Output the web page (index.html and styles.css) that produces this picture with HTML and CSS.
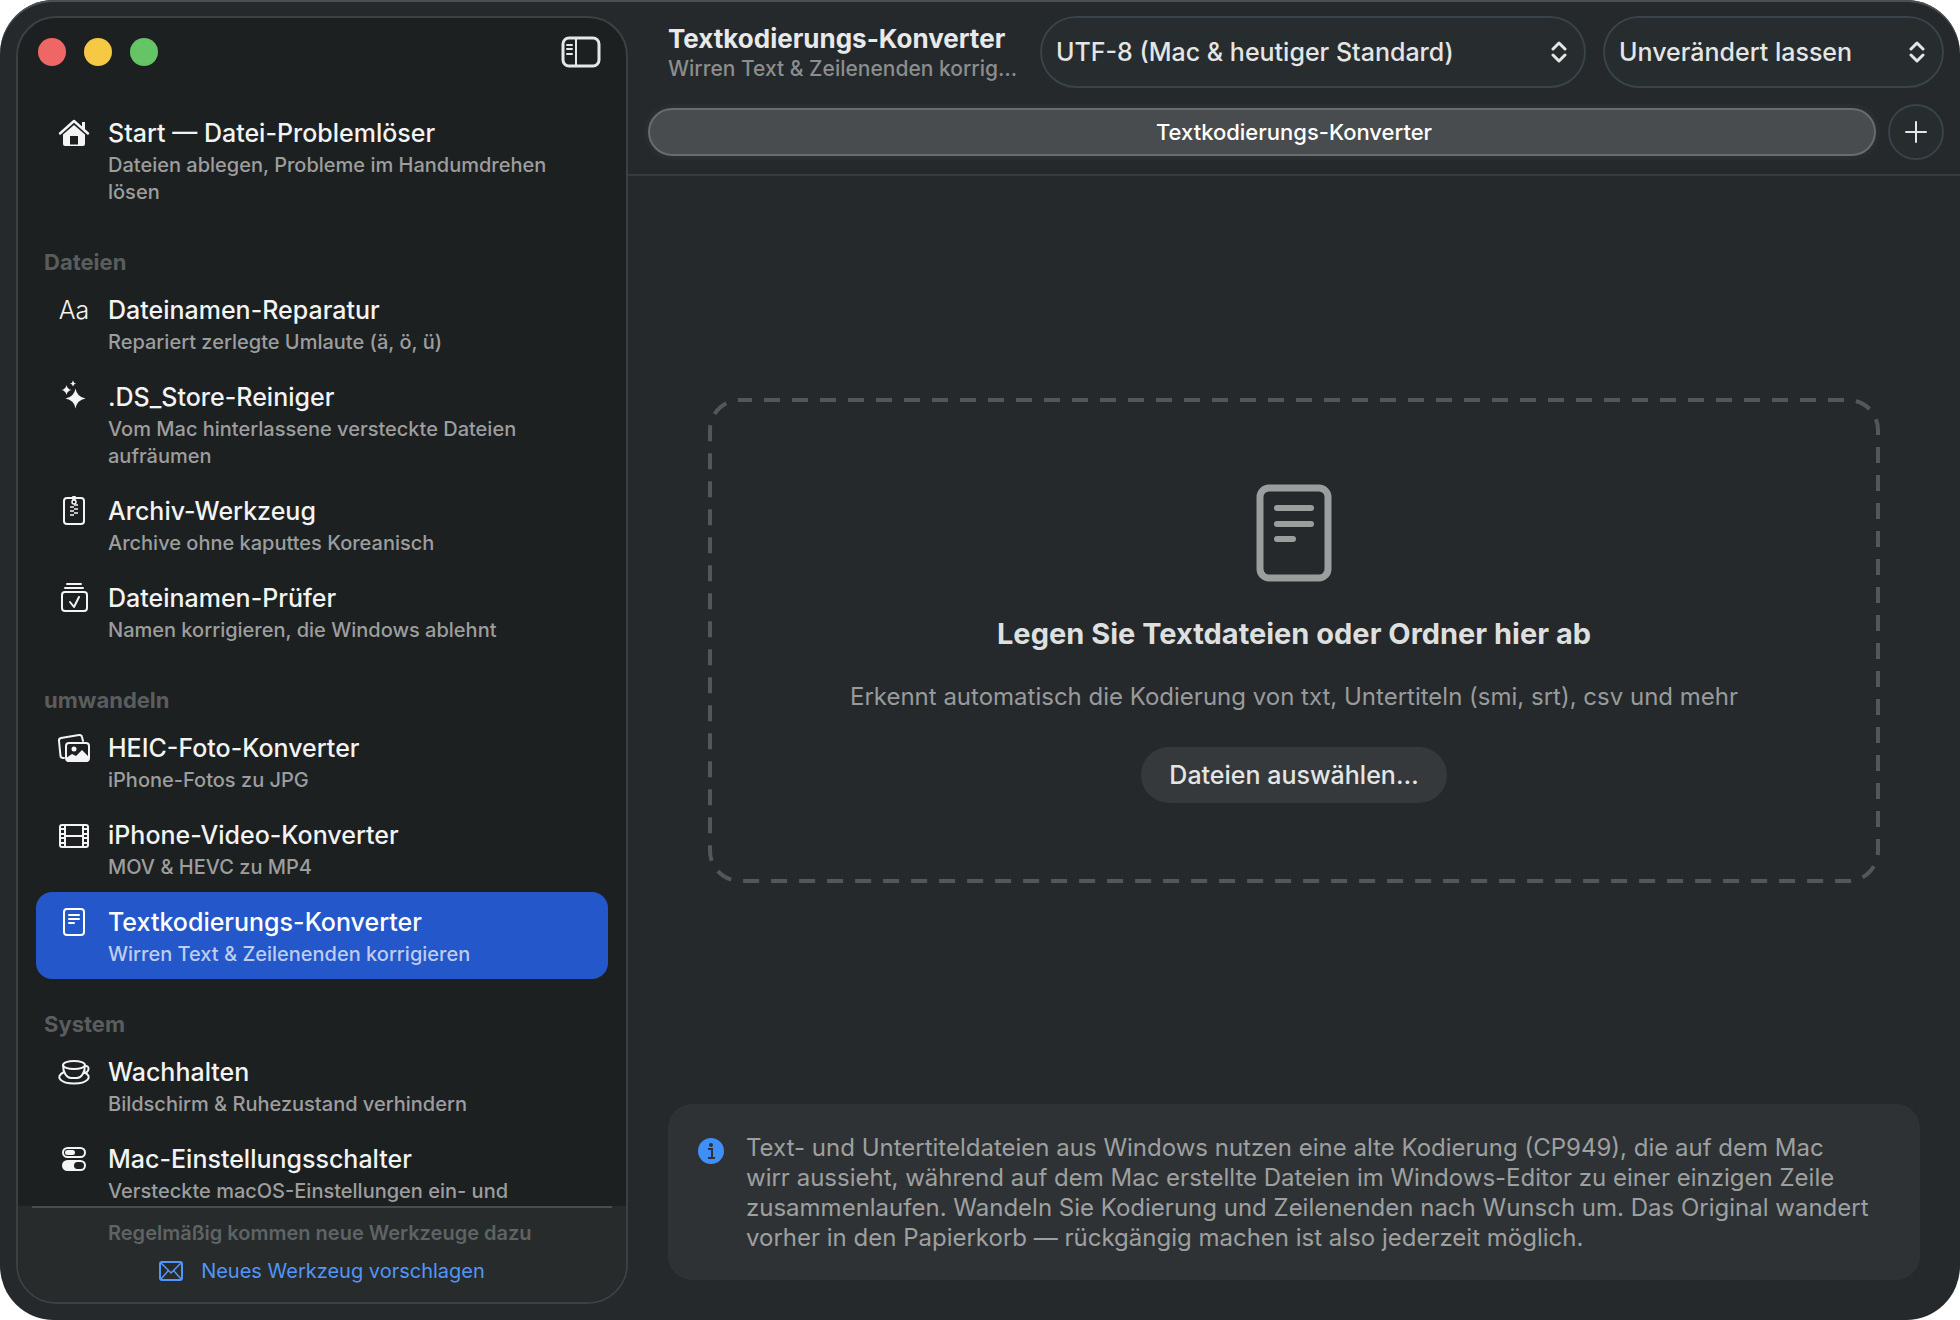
FILE: index.html
```html
<!DOCTYPE html>
<html lang="de">
<head>
    <meta charset="UTF-8">
    <meta name="viewport" content="width=device-width, initial-scale=1.0">
    <title>Textkodierungs-Konverter</title>
    <link rel="stylesheet" href="styles.css">
</head>
<body>

<div class="window">

    <!-- Sidebar -->
    <aside class="sidebar">
        <div class="titlebar">
            <div class="lights">
                <button type="button" class="light red" aria-label="Schließen"></button>
                <button type="button" class="light yellow" aria-label="Minimieren"></button>
                <button type="button" class="light green" aria-label="Maximieren"></button>
            </div>
            <button type="button" class="toggle" aria-label="Seitenleiste">
                <svg width="40" height="32" viewBox="0 0 40 32" fill="none" stroke="#e6e7e7" stroke-width="3">
                    <rect x="2" y="2" width="36" height="28" rx="6"/>
                    <path d="M15 2v28" stroke-width="2"/>
                    <path d="M6 9h5M6 13h5M6 18h5" stroke-width="2" stroke-linecap="round"/>
                </svg>
            </button>
        </div>

        <nav class="list">
            <a href="#" class="item">
                <svg class="icon" viewBox="0 0 34 34">
                    <path d="M3 16.500 17 4l14 12.500" fill="none" stroke="#f4f4f4" stroke-width="2.400" stroke-linecap="round" stroke-linejoin="round"/>
                    <path d="M25 5h3v8l-3-2.500z" fill="#f4f4f4"/>
                    <path d="M17 8 28 17.500V27a2 2 0 0 1-2 2h-5v-10h-8v10H8a2 2 0 0 1-2-2V17.500z" fill="#f4f4f4"/>
                    <path d="M13 27.500h8v1.500h-8z" fill="#f4f4f4"/>
                </svg>
                <span class="text">
                    <span class="name">Start — Datei-Problemlöser</span>
                    <span class="desc">Dateien ablegen, Probleme im Handumdrehen lösen</span>
                </span>
            </a>

            <h2>Dateien</h2>
            <a href="#" class="item">
                <span class="icon letters">Aa</span>
                <span class="text">
                    <span class="name">Dateinamen-Reparatur</span>
                    <span class="desc">Repariert zerlegte Umlaute (ä, ö, ü)</span>
                </span>
            </a>
            <a href="#" class="item">
                <svg class="icon" viewBox="0 0 34 34" fill="#f4f4f4">
                    <path d="M18.500 7.500q1.500 8.500 10 10q-8.500 1.500-10 10q-1.500-8.500-10-10q8.500-1.500 10-10z"/>
                    <path d="M9.500 4q.8 4.200 5 5q-4.200.8-5 5q-.8-4.200-5-5q4.200-.8 5-5z"/>
                    <path d="M16-.5q.5 2.500 3 3q-2.500.5-3 3q-.5-2.500-3-3q2.500-.5 3-3z"/>
                </svg>
                <span class="text">
                    <span class="name">.DS_Store-Reiniger</span>
                    <span class="desc">Vom Mac hinterlassene versteckte Dateien aufräumen</span>
                </span>
            </a>
            <a href="#" class="item">
                <svg class="icon" viewBox="0 0 34 34" fill="none" stroke="#f4f4f4" stroke-width="2">
                    <rect x="7" y="3" width="20" height="26" rx="3"/>
                    <rect x="15" y="1" width="4" height="4" rx="1" fill="#f4f4f4" stroke="none"/>
                    <circle cx="17" cy="7" r="2" stroke-width="1.500"/>
                    <path d="M13 12h4M13 16h4M13 20h4M17 10h4M17 14h4M17 18h4" stroke-width="1.600"/>
                </svg>
                <span class="text">
                    <span class="name">Archiv-Werkzeug</span>
                    <span class="desc">Archive ohne kaputtes Koreanisch</span>
                </span>
            </a>
            <a href="#" class="item">
                <svg class="icon" viewBox="0 0 34 34" fill="none" stroke="#f4f4f4" stroke-width="2" stroke-linecap="round" stroke-linejoin="round">
                    <path d="M10 2h14M8 6h18"/>
                    <rect x="5" y="10" width="25" height="19" rx="3"/>
                    <path d="M13 20l4 5 5-10"/>
                </svg>
                <span class="text">
                    <span class="name">Dateinamen-Prüfer</span>
                    <span class="desc">Namen korrigieren, die Windows ablehnt</span>
                </span>
            </a>

            <h2>umwandeln</h2>
            <a href="#" class="item">
                <svg class="icon" viewBox="0 0 34 34" fill="none" stroke="#f4f4f4" stroke-width="2">
                    <path d="M7 26H6q-2 0-2.500-2L2 9q-.3-2.500 2-3l18-3q2.500-.3 3 2l1 4" stroke-linecap="round"/>
                    <rect x="9" y="11" width="23" height="18" rx="3"/>
                    <circle cx="17" cy="17" r="2.500" fill="#f4f4f4" stroke="none"/>
                    <path d="M9 26l6-4 4 2 6-6 7 7v3l-2 2H11l-2-2z" fill="#f4f4f4" stroke="none"/>
                </svg>
                <span class="text">
                    <span class="name">HEIC-Foto-Konverter</span>
                    <span class="desc">iPhone-Fotos zu JPG</span>
                </span>
            </a>
            <a href="#" class="item">
                <svg class="icon" viewBox="0 0 34 34" fill="none" stroke="#f4f4f4" stroke-width="2">
                    <rect x="3" y="6" width="28" height="22" rx="2"/>
                    <path d="M8 6v22M26 6v22M8 17h18M3 10h5M3 15h5M3 19h5M3 24h5M26 10h5M26 15h5M26 19h5M26 24h5"/>
                </svg>
                <span class="text">
                    <span class="name">iPhone-Video-Konverter</span>
                    <span class="desc">MOV &amp; HEVC zu MP4</span>
                </span>
            </a>
            <a href="#" class="item selected" aria-current="page">
                <svg class="icon" viewBox="0 0 34 34" fill="none" stroke="#ffffff" stroke-width="2" stroke-linecap="round">
                    <rect x="7" y="3" width="20" height="26" rx="3"/>
                    <path d="M12 9h10M12 13h10M12 17h5"/>
                </svg>
                <span class="text">
                    <span class="name">Textkodierungs-Konverter</span>
                    <span class="desc">Wirren Text &amp; Zeilenenden korrigieren</span>
                </span>
            </a>

            <h2>System</h2>
            <a href="#" class="item">
                <svg class="icon" viewBox="0 0 34 34" fill="none" stroke="#f4f4f4" stroke-width="2">
                    <ellipse cx="17" cy="9" rx="11" ry="4"/>
                    <path d="M6 9c0 8 4 13 8 13h6c4 0 8-5 8-13"/>
                    <path d="M28 10c5-1 5 7-2 7"/>
                    <path d="M7 16c-10 5-3 11.500 10 11.500s20-6.500 10-11.500"/>
                </svg>
                <span class="text">
                    <span class="name">Wachhalten</span>
                    <span class="desc">Bildschirm &amp; Ruhezustand verhindern</span>
                </span>
            </a>
            <a href="#" class="item">
                <svg class="icon" viewBox="0 0 34 34">
                    <rect x="6" y="5" width="22" height="9" rx="4.500" fill="none" stroke="#f4f4f4" stroke-width="2"/>
                    <rect x="8" y="7" width="10" height="5" rx="2.500" fill="#f4f4f4"/>
                    <rect x="5" y="17" width="24" height="11" rx="5.500" fill="#f4f4f4"/>
                    <rect x="17" y="19" width="10" height="7" rx="3.500" fill="#1d2021"/>
                </svg>
                <span class="text">
                    <span class="name">Mac-Einstellungsschalter</span>
                    <span class="desc">Versteckte macOS-Einstellungen ein- und</span>
                </span>
            </a>
        </nav>

        <div class="footer">
            <p>Regelmäßig kommen neue Werkzeuge dazu</p>
            <a href="#">
                <svg width="24" height="20" viewBox="0 0 24 20" fill="none" stroke="#5196f8" stroke-width="2" stroke-linejoin="round">
                    <rect x="1" y="1" width="22" height="18" rx="2"/>
                    <path d="M2 2l10 10L22 2M2 18l7-8M22 18l-7-8" stroke-width="1.500"/>
                </svg>
                Neues Werkzeug vorschlagen
            </a>
        </div>
    </aside>

    <!-- Main area -->
    <main class="main">
        <header class="toolbar">
            <div class="heading">
                <h1>Textkodierungs-Konverter</h1>
                <p>Wirren Text &amp; Zeilenenden korrig…</p>
            </div>
            <div class="picker encoding">
                <select aria-label="Kodierung">
                    <option>UTF-8 (Mac &amp; heutiger Standard)</option>
                </select>
                <svg class="arrows" width="16" height="22" viewBox="0 0 16 22" fill="none" stroke="#e4e5e5" stroke-width="3" stroke-linecap="round" stroke-linejoin="round">
                    <path d="M2 8l6-6 6 6M2 14l6 6 6-6"/>
                </svg>
            </div>
            <div class="picker endings">
                <select aria-label="Zeilenenden">
                    <option>Unverändert lassen</option>
                </select>
                <svg class="arrows" width="16" height="22" viewBox="0 0 16 22" fill="none" stroke="#e4e5e5" stroke-width="3" stroke-linecap="round" stroke-linejoin="round">
                    <path d="M2 8l6-6 6 6M2 14l6 6 6-6"/>
                </svg>
            </div>
        </header>

        <div class="tabs">
            <button type="button" class="tab">Textkodierungs-Konverter</button>
            <button type="button" class="add" aria-label="Neuer Tab">
                <svg width="22" height="22" viewBox="0 0 22 22" fill="none" stroke="#e6e7e7" stroke-width="2" stroke-linecap="round">
                    <path d="M11 1v20M1 11h20"/>
                </svg>
            </button>
        </div>

        <section class="content">
            <div class="dropzone">
                <svg class="outline" aria-hidden="true">
                    <rect class="dashes" x="2" y="2" rx="30"/>
                </svg>
                <svg width="76" height="98" viewBox="0 0 76 98" fill="none" stroke="#9c9e9d" stroke-width="7" stroke-linecap="round">
                    <rect x="4" y="4" width="68" height="90" rx="9"/>
                    <path d="M21 24h34M21 40h34M21 55h16" stroke-width="6"/>
                </svg>
                <h2>Legen Sie Textdateien oder Ordner hier ab</h2>
                <p>Erkennt automatisch die Kodierung von txt, Untertiteln (smi, srt), csv und mehr</p>
                <button type="button" class="choose">Dateien auswählen…</button>
            </div>
        </section>

        <div class="info">
            <svg width="26" height="26" viewBox="0 0 26 26">
                <circle cx="13" cy="13" r="13" fill="#3f8ff7"/>
                <circle cx="13" cy="7" r="2" fill="#2f3234"/>
                <path d="M10 11h4v9M10 20h7" fill="none" stroke="#2f3234" stroke-width="2"/>
            </svg>
            <p>Text- und Untertiteldateien aus Windows nutzen eine alte Kodierung (CP949), die auf dem Mac<br>
            wirr aussieht, während auf dem Mac erstellte Dateien im Windows-Editor zu einer einzigen Zeile zusammenlaufen. Wandeln Sie Kodierung und Zeilenenden nach Wunsch um. Das Original wandert vorher in den Papierkorb — rückgängig machen ist also jederzeit möglich.</p>
        </div>
    </main>

</div>

</body>
</html>
```
FILE: styles.css
```css
* {
    box-sizing: border-box;
}
body {
    margin: 0;
    background-color: #ffffff;
    font-family: Inter, "Liberation Sans", sans-serif;
    color: #f2f3f3;
}
h1, h2, p {
    margin: 0;
}
a {
    text-decoration: none;
}
button, select {
    font-family: inherit;
    border: none;
    padding: 0;
}
.window {
    display: flex;
    height: 100vh;
    padding: 16px 0 16px 16px;
    border-radius: 54px;
    background-color: #25292c;
    box-shadow: inset 0 2px 0 #4a4f52;
    overflow: hidden;
}

/* Sidebar */
.sidebar {
    display: flex;
    flex-direction: column;
    flex: none;
    width: 612px;
    border: 2px solid #3a4144;
    border-radius: 40px;
    background-color: #1d2021;
    overflow: hidden;
}
.titlebar {
    display: flex;
    justify-content: space-between;
    align-items: center;
    padding: 16px 25px 16px 20px;
    height: 68px;
}
.lights {
    display: flex;
    gap: 18px;
}
.light {
    width: 28px;
    height: 28px;
    border-radius: 50%;
}
.red {
    background-color: #ee6764;
}
.yellow {
    background-color: #f5c943;
}
.green {
    background-color: #65c466;
}
.toggle {
    display: flex;
    background: none;
}
.list {
    flex: 1;
    min-height: 0;
    padding: 17px 18px 0;
    overflow: hidden;
}
.list h2 {
    padding: 32px 8px 5px;
    font-size: 22px;
    font-weight: 700;
    line-height: 26px;
    color: #5a5d5e;
}
.item {
    display: flex;
    gap: 17px;
    padding: 14px 24px 11px 21px;
    border-radius: 16px;
    color: #f2f3f3;
}
.icon {
    flex: none;
    width: 34px;
    height: 34px;
    overflow: visible;
}
.letters {
    font-size: 25px;
    font-weight: 300;
    line-height: 32px;
    text-align: center;
}
.text {
    display: flex;
    flex-direction: column;
    gap: 3px;
}
.name {
    font-size: 25px;
    font-weight: 500;
    line-height: 32px;
}
.desc {
    font-size: 20px;
    font-weight: 500;
    line-height: 27px;
    color: #9c9e9e;
}
.selected {
    background-color: #2457c9;
    color: #ffffff;
}
.selected .desc {
    color: #bdccef;
}
.footer {
    margin: 0 -2px;
    padding: 13px 16px 17px;
    background-color: #272b2c;
    background-image: linear-gradient(#4a4d4e, #4a4d4e);
    background-size: calc(100% - 32px) 2px;
    background-position: 16px 0;
    background-repeat: no-repeat;
    font-size: 20px;
    line-height: 28px;
}
.footer p {
    padding-left: 76px;
    font-weight: 600;
    color: #5f6364;
}
.footer a {
    display: flex;
    justify-content: center;
    align-items: center;
    gap: 18px;
    margin-top: 10px;
    color: #5196f8;
}

/* Main area */
.main {
    display: flex;
    flex-direction: column;
    flex: 1;
    min-width: 0;
}
.toolbar {
    display: flex;
    align-items: center;
    gap: 17px;
    padding: 0 16px 0 40px;
}
.heading {
    flex: 1;
    min-width: 0;
    padding-top: 1px;
}
.heading h1 {
    font-size: 26px;
    font-weight: 700;
    line-height: 32px;
    color: #e8e9e9;
}
.heading p {
    font-size: 21px;
    font-weight: 500;
    line-height: 28px;
    color: #8b8e8f;
    white-space: nowrap;
}
.picker {
    display: flex;
    align-items: center;
    position: relative;
}
.encoding {
    width: 546px;
}
.endings {
    width: 341px;
}
.picker select {
    width: 100%;
    height: 72px;
    padding: 0 56px 0 14px;
    appearance: none;
    border: 2px solid #38434a;
    border-radius: 36px;
    background-color: #272c2e;
    font-size: 25px;
    font-weight: 500;
    color: #e4e5e5;
}
.arrows {
    position: absolute;
    right: 19px;
    pointer-events: none;
}
.tabs {
    display: flex;
    align-items: center;
    gap: 12px;
    padding: 16px 16px 14px 20px;
    border-bottom: 2px solid #373b3e;
}
.tab {
    flex: 1;
    height: 48px;
    padding-left: 64px;
    border: 2px solid #686c6e;
    border-radius: 24px;
    background-color: #484c4e;
    box-shadow: 0 0 0 4px #292d2f;
    font-size: 22px;
    font-weight: 500;
    color: #ffffff;
}
.add {
    display: flex;
    justify-content: center;
    align-items: center;
    width: 56px;
    height: 56px;
    border: 2px solid #38434a;
    border-radius: 50%;
    background-color: #272c2e;
}
.content {
    display: flex;
    flex: 1;
    flex-direction: column;
    justify-content: center;
    padding: 0 80px;
}
.dropzone {
    display: flex;
    flex-direction: column;
    align-items: center;
    position: relative;
    padding: 86px 40px 80px;
}
.outline {
    position: absolute;
    top: 0;
    left: 0;
    width: 100%;
    height: 100%;
}
.dashes {
    width: calc(100% - 4px);
    height: calc(100% - 4px);
    fill: none;
    stroke: #53575a;
    stroke-width: 4px;
    stroke-dasharray: 16 12;
    stroke-dashoffset: 4px;
}
.dropzone h2 {
    margin-top: 34px;
    font-size: 29px;
    font-weight: 700;
    line-height: 36px;
    color: #dedfdf;
}
.dropzone p {
    margin-top: 29px;
    font-size: 24px;
    line-height: 32px;
    color: #999b9b;
}
.choose {
    position: relative;
    margin-top: 34px;
    height: 56px;
    padding: 0 28px;
    border-radius: 28px;
    background-color: #36393c;
    font-size: 25px;
    font-weight: 500;
    color: #e4e5e5;
}
.info {
    display: flex;
    gap: 22px;
    margin: 0 40px 24px;
    padding: 29px 30px 27px;
    border-radius: 24px;
    background-color: #2f3234;
}
.info svg {
    flex: none;
    margin-top: 5px;
}
.info p {
    font-size: 24px;
    line-height: 30px;
    color: #9ea0a0;
}
```
